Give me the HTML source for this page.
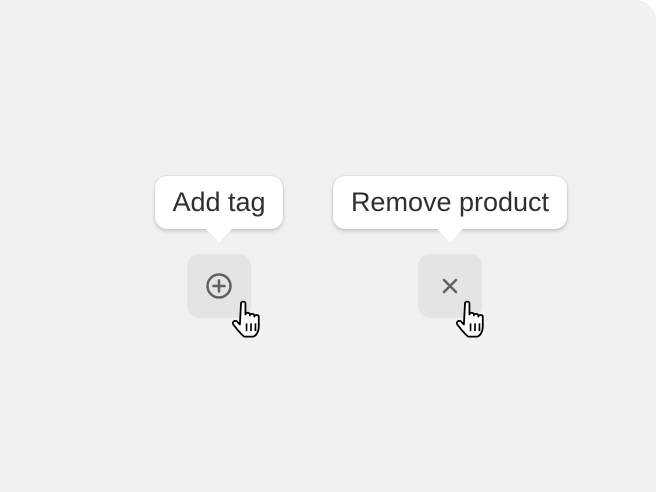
<!DOCTYPE html>
<html><head><style>
html,body{margin:0;padding:0;background:#fff}
.bg{position:absolute;left:0;top:0;width:656px;height:492px;background:#f1f1f1;border-radius:0 20px 0 0}
.tip{position:absolute;top:176px;height:53px;background:#fff;border-radius:12px;box-shadow:0 2px 4px rgba(0,0,0,.18),0 0 1px rgba(0,0,0,.25);font:27px "Liberation Sans",sans-serif;color:#303030;display:flex;align-items:center;justify-content:center;box-sizing:border-box;padding-bottom:1px}
.tip:after{content:"";position:absolute;left:50%;bottom:-13px;margin-left:-13px;border:13px solid transparent;border-bottom:0;border-top-color:#fff}
.btn{position:absolute;top:254px;width:64px;height:64px;background:#e4e4e4;border-radius:12px}
.btn svg{position:absolute;left:18px;top:18px}
.cur{position:absolute}
</style></head><body>
<div class="bg"></div>
<div class="tip" style="left:155px;width:128px">Add tag</div>
<div class="tip" style="left:333px;width:234px">Remove product</div>
<div class="btn" style="left:187px"><svg width="28" height="28" viewBox="0 0 28 28"><circle cx="14" cy="14" r="11.5" fill="none" stroke="#616161" stroke-width="2.5"/><path d="M14 8.5v11M8.5 14h11" stroke="#616161" stroke-width="2.5" stroke-linecap="round"/></svg></div>
<div class="btn" style="left:418px"><svg width="28" height="28" viewBox="0 0 28 28"><path d="M8 8l12 12M20 8L8 20" stroke="#616161" stroke-width="2.5" stroke-linecap="round"/></svg></div>
<svg class="cur" style="left:232px;top:300px" width="38" height="40" viewBox="0 0 34 36"><path d="M8 3c0-2 4-2 4 0v10c0-2 4-2 4 0v1c0-2 4-2 4 0v1c0-2 4-2 4 0v9c0 4-2 8-5 9h-8c-2-1-4-4-6-6l-4-5c-1-2 1-4 3-3l3 3z" fill="#fff" stroke="#000" stroke-width="1.6" stroke-linejoin="round"/><path d="M13 21v7M17 21v7M21 21v7" stroke="#000" stroke-width="1.5"/></svg>
<svg class="cur" style="left:456px;top:300px" width="38" height="40" viewBox="0 0 34 36"><path d="M8 3c0-2 4-2 4 0v10c0-2 4-2 4 0v1c0-2 4-2 4 0v1c0-2 4-2 4 0v9c0 4-2 8-5 9h-8c-2-1-4-4-6-6l-4-5c-1-2 1-4 3-3l3 3z" fill="#fff" stroke="#000" stroke-width="1.6" stroke-linejoin="round"/><path d="M13 21v7M17 21v7M21 21v7" stroke="#000" stroke-width="1.5"/></svg>
</body></html>
